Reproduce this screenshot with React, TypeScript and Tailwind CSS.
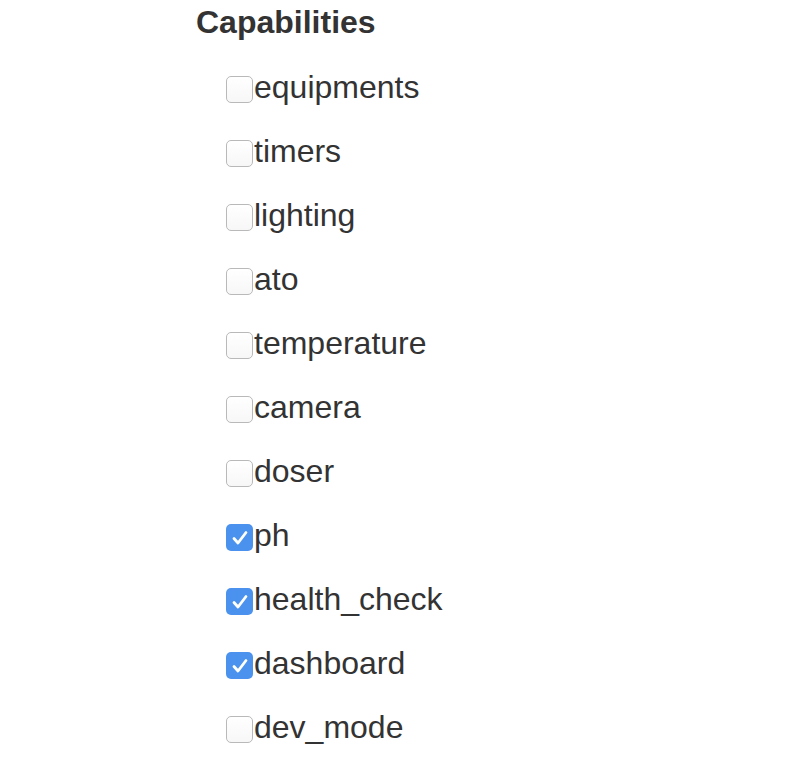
import React from "react";

const items: [string, boolean][] = [
  ["equipments", false],
  ["timers", false],
  ["lighting", false],
  ["ato", false],
  ["temperature", false],
  ["camera", false],
  ["doser", false],
  ["ph", true],
  ["health_check", true],
  ["dashboard", true],
  ["dev_mode", false],
];

function Box({ checked }: { checked: boolean }) {
  if (checked) {
    return (
      <span className="mt-[5px] flex h-[27px] w-[27px] shrink-0 items-center justify-center rounded-[5px] bg-[#4a92ee]">
        <svg width="20" height="20" viewBox="0 0 20 20" fill="none">
          <path d="M4 10.5 L8 15 L16 4.5" stroke="white" strokeWidth="2.8" strokeLinecap="round" strokeLinejoin="round" />
        </svg>
      </span>
    );
  }
  return (
    <span className="mt-[5px] block h-[27px] w-[27px] shrink-0 rounded-[5px] border border-[#b9b9b9] bg-gradient-to-b from-white to-[#f7f7f7]" />
  );
}

export default function App() {
  return (
    <div className="min-h-[772px] w-[788px] bg-white text-[#333333]" style={{ fontFamily: '"Liberation Sans", Arial, sans-serif' }}>
      <div className="pl-[196px] pt-[3px]">
        <h2 className="text-[32px] font-bold leading-[38px]">Capabilities</h2>
        <ul className="mt-[14px] pl-[30px]">
          {items.map(([label, checked]) => (
            <li key={label} className="flex h-[64px] items-center text-[32px] leading-[64px]">
              <Box checked={checked} />
              <span className="ml-[1px]">{label}</span>
            </li>
          ))}
        </ul>
      </div>
    </div>
  );
}
